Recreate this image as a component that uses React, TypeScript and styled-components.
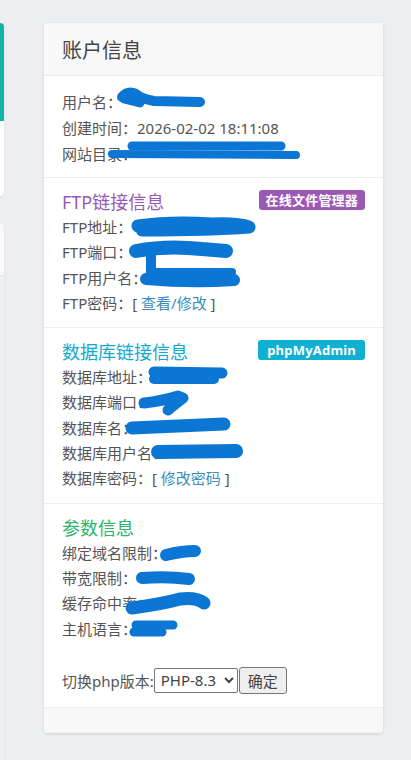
import React from "react";
import styled, { createGlobalStyle } from "styled-components";

const Global = createGlobalStyle`
  html, body { margin: 0; padding: 0; }
  body {
    background: #eceef2;
    font-family: "Noto Sans", "Noto Sans CJK SC", sans-serif;
    color: #555;
  }
`;

const Page = styled.div`
  display: flex;
  gap: 40px;
  padding-top: 23px;
  min-height: 760px;
  box-sizing: border-box;
  overflow: hidden;
`;

const SideCol = styled.div`
  width: 4px;
  flex: none;
  display: flex;
  flex-direction: column;
  gap: 28px;
`;

const SideCard = styled.div`
  height: 173px;
  background: #fff;
  border-radius: 0 4px 4px 0;
  box-shadow: 0 1px 2px rgba(0, 0, 0, 0.08);
  overflow: hidden;
`;

const SideTeal = styled.div`
  height: 98px;
  background: #12b6a4;
`;

const SideCard2 = styled.div`
  flex: 1;
  background: #eff0f4;
  border-radius: 0 4px 0 0;
  box-shadow: 1px 0 0 #e6e7eb;
`;

const SideHead = styled.div`
  height: 51px;
  background: #f9f9f9;
  border-bottom: 1px solid #e3e3e3;
  border-radius: 0 4px 0 0;
`;

const Card = styled.div`
  width: 339px;
  height: 710px;
  flex: none;
  background: #fff;
  border-radius: 4px;
  box-shadow: 0 1px 3px rgba(0, 0, 0, 0.12);
  display: flex;
  flex-direction: column;
  overflow: hidden;
`;

const CardHead = styled.div`
  height: 52px;
  background: #f8f8f8;
  border-bottom: 1px solid #ececec;
  display: flex;
  align-items: center;
  padding: 0 18px;
  font-size: 20px;
  color: #444;
`;

const Section = styled.div<{ $first?: boolean }>`
  padding: ${(p) => (p.$first ? "13px 18px 10px" : "11px 18px 11px")};
  border-bottom: 1px solid #eee;
`;

const LastSection = styled.div`
  padding: 11px 18px 12px;
  border-bottom: 1px solid #eee;
  flex: 1;
`;

const Footer = styled.div`
  height: 25px;
  background: #f8f8f8;
`;

const TitleRow = styled.div`
  display: flex;
  justify-content: space-between;
  align-items: flex-start;
`;

const Title = styled.div<{ $color: string }>`
  font-size: 18px;
  line-height: 26px;
  color: ${(p) => p.$color};
`;

const Badge = styled.span<{ $bg: string; $pad: number }>`
  margin-top: 1px;
  height: 20px;
  line-height: 20px;
  padding: 0 ${(p) => p.$pad}px;
  border-radius: 3px;
  background: ${(p) => p.$bg};
  color: #fff;
  font-weight: 700;
  font-size: 13px;
  letter-spacing: 0.2px;
`;

const Row = styled.div<{ $lh?: number }>`
  position: relative;
  font-size: 15px;
  line-height: ${(p) => p.$lh ?? 25.3}px;
  white-space: nowrap;
`;

const Link = styled.a`
  color: #3c8dbc;
  text-decoration: none;
`;

const Scribble = styled.svg`
  position: absolute;
  left: 0;
  top: 0;
  width: 100%;
  height: 100%;
  overflow: visible;
  pointer-events: none;
  path {
    fill: none;
    stroke: #0b76d3;
    stroke-linecap: round;
    stroke-linejoin: round;
  }
`;

const Spacer = styled.div`
  height: 25.3px;
`;

const PhpRow = styled.div`
  display: flex;
  align-items: center;
  font-size: 15px;
  height: 26px;
`;

const Select = styled.select`
  width: 84px;
  height: 25px;
  font-family: "Noto Sans", sans-serif;
  font-size: 15px;
  color: #444;
  border: 1px solid #767676;
  border-radius: 2px;
  background: #fff;
  padding: 0 0 0 2px;
  margin: 0;
`;

const Button = styled.button`
  height: 27px;
  margin-left: 1px;
  padding: 0 8px;
  font-family: "Noto Sans", "Noto Sans CJK SC", sans-serif;
  font-size: 15px;
  color: #444;
  background: #efefef;
  border: 1px solid #767676;
  border-radius: 3px;
`;

type Mark = { d: string; w: number };
type Item = { label: string; value?: string; marks?: Mark[]; link?: string };

const Marks = ({ marks }: { marks?: Mark[] }) =>
  marks ? (
    <Scribble>
      {marks.map((m, i) => (
        <path key={i} d={m.d} strokeWidth={m.w} />
      ))}
    </Scribble>
  ) : null;

const RowItem = ({ item, lh }: { item: Item; lh?: number }) => (
  <Row $lh={lh}>
    {item.label}
    {item.link ? (
      <>
        [ <Link href="#">{item.link}</Link> ]
      </>
    ) : (
      item.value
    )}
    <Marks marks={item.marks} />
  </Row>
);

const account: Item[] = [
  {
    label: "用户名：",
    value: "",
    marks: [
      { d: "M60 8 Q66 1 74 5 Q80 10 92 12 L138 13", w: 10 },
      { d: "M62 10 L78 14", w: 9 },
    ],
  },
  { label: "创建时间：", value: "2026-02-02 18:11:08" },
  {
    label: "网站目录：",
    value: "",
    marks: [
      { d: "M70 5 L219 5", w: 9 },
      { d: "M50 13 L234 14", w: 8 },
    ],
  },
];

const ftp: Item[] = [
  {
    label: "FTP地址：",
    value: "",
    marks: [{ d: "M76 11 Q110 6 150 9 Q176 8 187 12 Q150 15 80 15", w: 13 }],
  },
  {
    label: "FTP端口：",
    value: "",
    marks: [
      { d: "M74 11 Q105 5 140 9 L164 11", w: 14 },
      { d: "M89 14 L89 32", w: 10 },
    ],
  },
  {
    label: "FTP用户名：",
    value: "",
    marks: [
      { d: "M88 6 L170 6", w: 8 },
      { d: "M84 13 Q130 17 172 14", w: 12 },
    ],
  },
  { label: "FTP密码：", link: "查看/修改" },
];

const db: Item[] = [
  {
    label: "数据库地址：",
    value: "",
    marks: [
      { d: "M92 7 L160 8", w: 11 },
      { d: "M92 14 L152 14", w: 10 },
    ],
  },
  {
    label: "数据库端口：",
    value: "",
    marks: [{ d: "M82 13 Q100 11 116 6 L121 8 Q112 15 106 20", w: 11 }],
  },
  {
    label: "数据库名：",
    value: "",
    marks: [{ d: "M70 12 Q120 10 162 8", w: 13 }],
  },
  {
    label: "数据库用户名：",
    value: "",
    marks: [{ d: "M96 11 L174 10", w: 14 }],
  },
  { label: "数据库密码：", link: "修改密码" },
];

const params: Item[] = [
  {
    label: "绑定域名限制：",
    value: "",
    marks: [{ d: "M104 14 Q120 10 133 10", w: 12 }],
  },
  {
    label: "带宽限制：",
    value: "",
    marks: [{ d: "M80 12 Q105 10 127 13", w: 12 }],
  },
  {
    label: "缓存命中率：",
    value: "",
    marks: [{ d: "M70 17 Q100 13 118 8 Q134 6 142 12", w: 13 }],
  },
  {
    label: "主机语言：",
    value: "",
    marks: [
      { d: "M74 8 L111 8", w: 9 },
      { d: "M72 15 L100 15", w: 9 },
    ],
  },
];

export default function App() {
  return (
    <>
      <Global />
      <Page>
        <SideCol>
          <SideCard>
            <SideTeal />
          </SideCard>
          <SideCard2>
            <SideHead />
          </SideCard2>
        </SideCol>
        <Card>
          <CardHead>账户信息</CardHead>
          <Section $first>
            {account.map((it) => (
              <RowItem key={it.label} item={it} lh={26} />
            ))}
          </Section>
          <Section>
            <TitleRow>
              <Title $color="#9b59b6">FTP链接信息</Title>
              <Badge $bg="#9b59b6" $pad={7}>在线文件管理器</Badge>
            </TitleRow>
            {ftp.map((it) => (
              <RowItem key={it.label} item={it} />
            ))}
          </Section>
          <Section>
            <TitleRow>
              <Title $color="#10a9cf">数据库链接信息</Title>
              <Badge $bg="#10b0d3" $pad={9}>phpMyAdmin</Badge>
            </TitleRow>
            {db.map((it) => (
              <RowItem key={it.label} item={it} />
            ))}
          </Section>
          <LastSection>
            <Title $color="#2db46b">参数信息</Title>
            {params.map((it) => (
              <RowItem key={it.label} item={it} />
            ))}
            <Spacer />
            <PhpRow>
              切换php版本:
              <Select defaultValue="PHP-8.3">
                <option>PHP-8.3</option>
                <option>PHP-8.2</option>
                <option>PHP-7.4</option>
              </Select>
              <Button>确定</Button>
            </PhpRow>
          </LastSection>
          <Footer />
        </Card>
      </Page>
    </>
  );
}
